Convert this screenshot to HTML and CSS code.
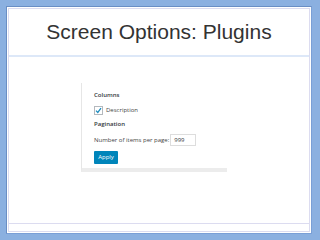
FILE: index.html
```html
<!DOCTYPE html>
<html>
<head>
  <title>Screen Options: Plugins</title>
  <link rel="stylesheet" href="styles.css">
</head>
<body>
  <div class="frame">
    <div class="inner">
      <h1 class="title">Screen Options: Plugins</h1>
      <div class="stage">
        <div class="panel">
          <div class="legend">Columns</div>
          <label class="check">
            <span class="box">
              <svg width="7" height="7" viewBox="0 0 7 7"><path d="M1 3.6 L2.8 5.4 L6 1.2" fill="none" stroke="#1e8cbe" stroke-width="1.3"/></svg>
            </span>
            Description
          </label>
          <div class="legend">Pagination</div>
          <div class="per-page">
            Number of items per page:
            <span class="field">999</span>
          </div>
          <span class="apply">Apply</span>
        </div>
      </div>
      <div class="footer"></div>
    </div>
  </div>
</body>
</html>
```

FILE: styles.css
```css
html, body {
    margin: 0;
    width: 320px;
    height: 240px;
    overflow: hidden;
    background: #8bb0e0;
}

.frame {
    margin: 6px 8px 0 6px;
    height: 224px;
    border: 1px solid #6a8ec4;
    border-right-color: #7a9fd6;
    border-bottom-color: #7a9fd6;
    background: #fff;
    padding: 1px;
}

.inner {
    height: 100%;
    box-sizing: border-box;
    border: 1px solid #dcdcf0;
    display: flex;
    flex-direction: column;
}

.title {
    margin: 0;
    height: 46px;
    text-align: center;
    font: 21px "Liberation Sans", Arial, sans-serif;
    line-height: 46px;
    color: #333;
    border-bottom: 2px solid #dde8f8;
}

.stage {
    flex: 1;
    padding: 26px 0 0 72px;
}

.panel {
    width: 133px;
    height: 77px;
    padding: 8px 0 0 12px;
    border-left: 1px solid #e6e6e6;
    border-bottom: 4px solid #ececec;
    font: 6px "Open Sans", sans-serif;
    color: #444;
}

.legend {
    font-weight: 600;
    color: #32373c;
    height: 10px;
}

.legend + .check {
    margin-top: 4px;
}

.legend + .per-page {
    margin-top: 4px;
}

.check {
    display: flex;
    align-items: center;
    gap: 3px;
    height: 10px;
    margin-bottom: 5px;
}

.box {
    width: 7px;
    height: 7px;
    border: 1px solid #b4b9be;
    background: #fff;
    display: flex;
    align-items: center;
    justify-content: center;
}

.per-page {
    display: flex;
    align-items: center;
    gap: 1px;
    height: 12px;
    margin-bottom: 5px;
}

.field {
    width: 21px;
    height: 10px;
    line-height: 10px;
    padding-left: 3px;
    border: 1px solid #ddd;
    color: #32373c;
}

.apply {
    display: inline-block;
    width: 24px;
    height: 13px;
    line-height: 13px;
    text-align: center;
    background: #0085ba;
    border-radius: 1px;
    color: #fff;
}

.footer {
    margin-top: auto;
    height: 7px;
    border-top: 1px solid #dcdcf0;
}
```
